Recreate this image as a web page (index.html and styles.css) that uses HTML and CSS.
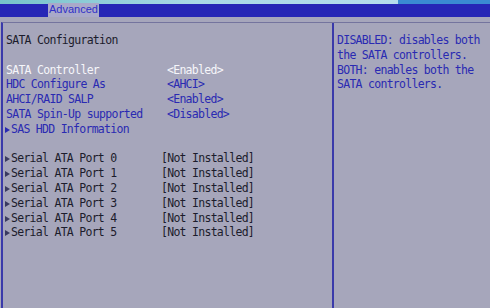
FILE: index.html
```html
<!DOCTYPE html>
<html lang="en">
<head>
    <meta charset="UTF-8">
    <title>SATA Configuration</title>
    <link rel="stylesheet" href="styles.css">
</head>
<body>
    <div class="title-strip"><span class="title-tail"></span></div>
    <div class="menubar">
        <span class="tab active">Advanced</span>
    </div>
    <div class="gap"></div>

    <div class="setup">
        <div class="items">
            <div class="line heading">SATA Configuration</div>
            <div class="line"></div>

            <div class="line row selected"><span class="name">SATA Controller</span><span class="value">&lt;Enabled&gt;</span></div>
            <div class="line row"><span class="name">HDC Configure As</span><span class="value">&lt;AHCI&gt;</span></div>
            <div class="line row"><span class="name">AHCI/RAID SALP</span><span class="value">&lt;Enabled&gt;</span></div>
            <div class="line row"><span class="name">SATA Spin-Up supported</span><span class="value">&lt;Disabled&gt;</span></div>
            <div class="line row"><span class="name"><i class="arrow"></i>SAS HDD Information</span></div>
            <div class="line"></div>

            <!-- ports -->
            <div class="line port"><span class="name"><i class="arrow"></i>Serial ATA Port 0</span><span class="value">[Not Installed]</span></div>
            <div class="line port"><span class="name"><i class="arrow"></i>Serial ATA Port 1</span><span class="value">[Not Installed]</span></div>
            <div class="line port"><span class="name"><i class="arrow"></i>Serial ATA Port 2</span><span class="value">[Not Installed]</span></div>
            <div class="line port"><span class="name"><i class="arrow"></i>Serial ATA Port 3</span><span class="value">[Not Installed]</span></div>
            <div class="line port"><span class="name"><i class="arrow"></i>Serial ATA Port 4</span><span class="value">[Not Installed]</span></div>
            <div class="line port"><span class="name"><i class="arrow"></i>Serial ATA Port 5</span><span class="value">[Not Installed]</span></div>
        </div>

        <div class="help">
            <div class="line">DISABLED: disables both</div>
            <div class="line">the SATA controllers.</div>
            <div class="line">BOTH: enables both the</div>
            <div class="line">SATA controllers.</div>
        </div>
    </div>
</body>
</html>
```

FILE: styles.css
```css
:root {
    --bg: #a6a6bb;
    --bar: #2626b6;
    --blue: #2a2ab2;
    --dark: #1c1c2c;
    --edge: #3a3aaa;
}

* {
    box-sizing: border-box;
    margin: 0;
    padding: 0;
}

html, body {
    height: 100%;
}

body {
    background: var(--bg);
    font-family: "DejaVu Sans Mono", "Liberation Mono", monospace;
    font-size: 11.5px;
    letter-spacing: -0.72px;
    overflow: hidden;
    display: flex;
    flex-direction: column;
}

.title-strip {
    height: 4px;
    background: linear-gradient(90deg, #76c2ca 0%, #a9d8e6 40%, #b4dcec 80%);
    display: flex;
    justify-content: flex-end;
}

.title-tail {
    width: 92px;
    background: #3a8ad2;
}

.menubar {
    height: 13px;
    background: var(--bar);
    display: flex;
    padding-left: 48px;
}

.tab {
    font-family: "Liberation Sans", Arial, sans-serif;
    font-size: 11px;
    letter-spacing: 0;
    line-height: 13px;
    padding: 0 1px;
    color: #3030c8;
}

.tab.active {
    background: #a9a9c9;
    margin-top: -1px;
    height: 14px;
}

.gap {
    height: 5px;
}

.setup {
    flex: 1;
    display: grid;
    grid-template-columns: 331px 1fr;
    border-top: 1px solid #74749e;
    border-left: 2px solid var(--edge);
    margin-left: 1px;
}

.items {
    border-right: 2px solid var(--edge);
    padding: 10px 0 0 3px;
}

.help {
    padding: 10px 0 0 3px;
    color: var(--blue);
}

.line {
    height: 14.8px;
    line-height: 14.8px;
    white-space: pre;
}

.heading {
    color: var(--dark);
}

.row {
    display: grid;
    grid-template-columns: 161px 1fr;
    color: var(--blue);
}

.row.selected {
    color: #f6f6fa;
}

.port {
    display: grid;
    grid-template-columns: 155px 1fr;
    color: var(--dark);
}

.arrow {
    display: inline-block;
    width: 0;
    height: 0;
    border-left: 5px solid currentColor;
    border-top: 3.5px solid transparent;
    border-bottom: 3.5px solid transparent;
    margin: 0 1px 0 -1px;
    vertical-align: 0;
}

.port .arrow {
    color: #3a3a60;
}
```
